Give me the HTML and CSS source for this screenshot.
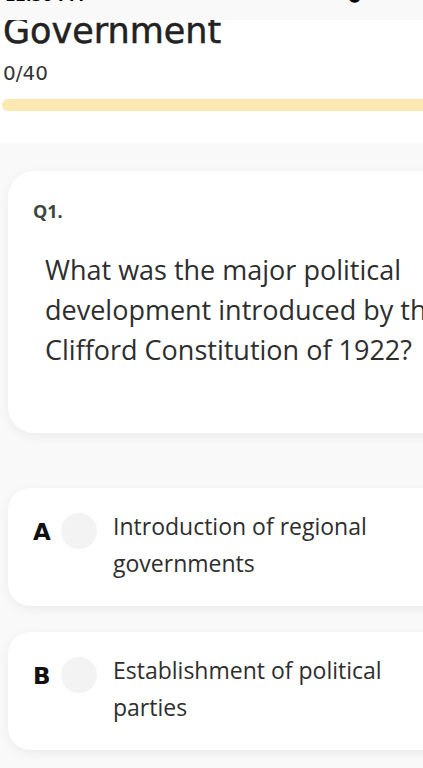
FILE: index.html
```html
<!DOCTYPE html>
<html lang="en">
<head>
    <meta charset="UTF-8">
    <meta name="viewport" content="width=device-width, initial-scale=1.0">
    <title>Government Quiz</title>
    <link rel="stylesheet" href="styles.css">
</head>
<body>
    <div class="status-bar">
        <span class="clock">12:30 PM</span>
        <span class="status-icon">&#9679;</span>
    </div>

    <div class="header">
        <h1>Government</h1>
        <div class="counter">0/40</div>
        <div class="progress">
            <div class="progress-fill"></div>
        </div>
    </div>

    <div class="quiz">
        <div class="question-card">
            <div class="question-number">Q1.</div>
            <p class="question-text">What was the major political development introduced by the Clifford Constitution of 1922?</p>
        </div>

        <div class="options">
            <div class="option-card">
                <span class="option-letter">A</span>
                <span class="option-radio"></span>
                <span class="option-text">Introduction of regional governments</span>
            </div>
            <div class="option-card">
                <span class="option-letter">B</span>
                <span class="option-radio"></span>
                <span class="option-text">Establishment of political parties</span>
            </div>
        </div>
    </div>
</body>
</html>
```

FILE: styles.css
```css
body {
    margin: 0;
    padding: 0;
    width: 423px;
    height: 768px;
    overflow: hidden;
    background-color: #f9f9f9;
    font-family: "DejaVu Sans", sans-serif;
}

/* Status bar, scrolled mostly out of view; sits above the title */
.status-bar {
    position: relative;
    z-index: 1;
    height: 20px;
    overflow: hidden;
    display: flex;
    justify-content: space-between;
    padding: 0 62px 0 5px;
    background-color: #f9f9f9;
}

.status-bar span {
    margin-top: -13px;
    font-weight: bold;
    font-size: 15px;
    line-height: 18px;
    color: #000;
}

/* Title block */
.header {
    display: flow-root;
    background-color: #fff;
    height: 123px;
    padding-left: 3px;
    box-sizing: border-box;
}

.header h1 {
    margin: -10px 0 0 0;
    font-size: 35px;
    font-weight: normal;
    line-height: 42px;
    color: #222;
    -webkit-text-stroke: 0.5px #222;
}

.counter {
    margin-top: 9px;
    font-size: 20px;
    line-height: 24px;
    color: #333;
}

.progress {
    margin-top: 14px;
    height: 12px;
    width: 440px;
    margin-left: -1px;
    border-radius: 6px;
    background-color: #fde8b1;
}

.progress-fill {
    width: 0;
    height: 100%;
}

/* Question + answers */
.quiz {
    padding: 28px 0 0 8px;
    font-family: "Open Sans", sans-serif;
}

.question-card {
    width: 450px;
    height: 262px;
    box-sizing: border-box;
    padding: 30px 25px;
    background-color: #fff;
    border-radius: 26px;
    box-shadow: 0 3px 12px rgba(0, 0, 0, 0.06);
}

.question-number {
    font-size: 18px;
    line-height: 20px;
    font-weight: bold;
    color: #3b473b;
}

.question-text {
    margin: 29px 0 0 12px;
    width: 410px;
    font-size: 27px;
    line-height: 40px;
    color: #2e2e2e;
}

.options {
    display: flex;
    flex-direction: column;
    gap: 26px;
    margin-top: 55px;
}

.option-card {
    width: 450px;
    height: 118px;
    box-sizing: border-box;
    display: flex;
    align-items: flex-start;
    padding: 25px 25px;
    background-color: #fff;
    border-radius: 22px;
    box-shadow: 0 3px 12px rgba(0, 0, 0, 0.06);
}

.option-letter {
    width: 28px;
    margin-top: 6px;
    font-family: "DejaVu Sans", sans-serif;
    font-size: 23px;
    font-weight: bold;
    color: #111;
}

.option-radio {
    width: 36px;
    height: 36px;
    border-radius: 50%;
    background-color: #f3f3f3;
    flex-shrink: 0;
}

.option-text {
    margin-left: 16px;
    width: 300px;
    font-size: 23px;
    line-height: 37px;
    margin-top: -5px;
    color: #2e2e2e;
}
```
